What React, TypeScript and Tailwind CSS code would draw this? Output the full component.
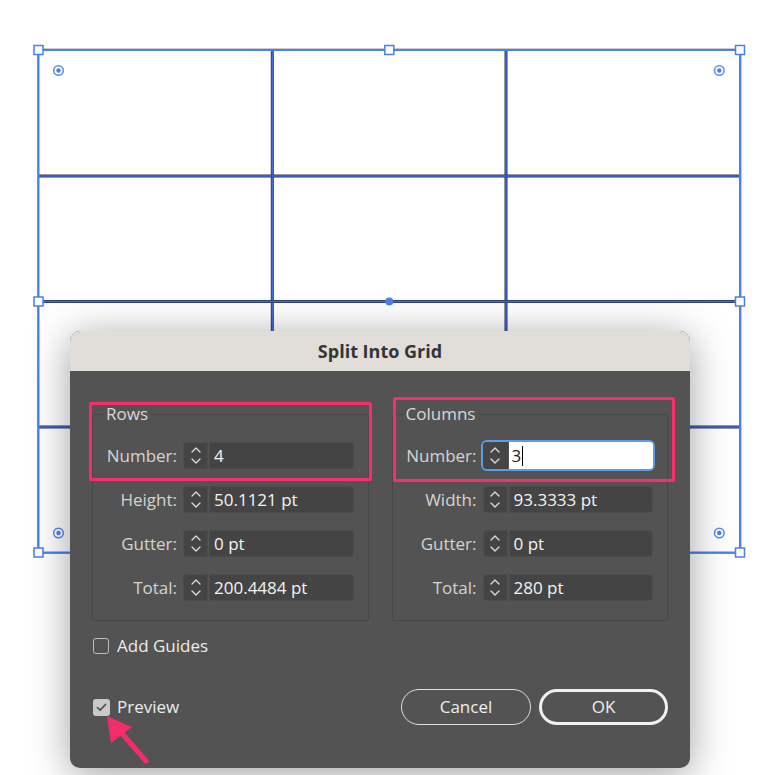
import React from "react";

const FONT = { fontFamily: '"Open Sans", "Noto Sans", sans-serif' };

function Spinner({ focused }: { focused?: boolean }) {
  return (
    <div
      className={
        "flex w-[25px] shrink-0 flex-col items-center justify-center gap-[5px] rounded-l-[4px] " +
        (focused ? "bg-[#454545]" : "bg-[#444444] border border-[#4c4c4c]")
      }
    >
      <svg width="10" height="6" viewBox="0 0 10 6">
        <path d="M1 5 L5 1 L9 5" fill="none" stroke="#dcdcdc" strokeWidth="1.3" strokeLinecap="round" strokeLinejoin="round" />
      </svg>
      <svg width="10" height="6" viewBox="0 0 10 6">
        <path d="M1 1 L5 5 L9 1" fill="none" stroke="#dcdcdc" strokeWidth="1.3" strokeLinecap="round" strokeLinejoin="round" />
      </svg>
    </div>
  );
}

function Field({ label, value, focused }: { label: string; value: string; focused?: boolean }) {
  return (
    <div className="flex h-[27px] items-center">
      <div className="w-[76px] text-right text-[17px] font-medium leading-none text-[#d4d4d4]">{label}</div>
      <div
        className={
          "ml-[6px] flex h-full flex-1 gap-px " +
          (focused ? "rounded-[4px] ring-2 ring-[#5c9ee6]" : "")
        }
      >
        <Spinner focused={focused} />
        {focused ? (
          <div className="flex flex-1 items-center rounded-r-[3px] bg-white pl-[3px] text-[17px] font-medium leading-none text-[#222]">
            3<span className="ml-px inline-block h-[20px] w-px bg-black" />
          </div>
        ) : (
          <div className="flex flex-1 items-center rounded-r-[4px] border border-[#4c4c4c] bg-[#444444] pl-[4px] text-[17px] font-medium leading-none text-[#f4f4f4]">
            {value}
          </div>
        )}
      </div>
    </div>
  );
}

function Group({ title, fields }: { title: string; fields: { label: string; value: string; focused?: boolean }[] }) {
  return (
    <fieldset className="rounded-[3px] border border-[#474747] pb-[19px] pl-[8px] pr-[14px]">
      <legend className="ml-[2px] px-[3px] text-[17px] font-medium leading-[24px] text-[#d8d8d8]">{title}</legend>
      <div className="mt-[16px] flex flex-col gap-[17px]">
        {fields.map((f) => (
          <Field key={f.label} {...f} />
        ))}
      </div>
    </fieldset>
  );
}

function Canvas() {
  const xs = [38.5, 272.3, 506, 740];
  const ys = [50, 176, 301.5, 427, 552.5];
  const handles: [number, number][] = [
    [38.5, 50], [389.3, 50], [740, 50],
    [38.5, 301.5], [740, 301.5],
    [38.5, 552.5], [389.3, 552.5], [740, 552.5],
  ];
  const targets: [number, number][] = [
    [58.5, 70.5], [719.3, 70.5], [58.5, 533], [719.3, 533],
  ];
  return (
    <svg className="absolute left-0 top-0" width="768" height="775" viewBox="0 0 768 775">
      {[1, 2].map((i) => (
        <g key={"v" + i}>
          <line x1={xs[i]} y1={ys[0]} x2={xs[i]} y2={ys[4]} stroke="#2a3358" strokeWidth="3" />
          <line x1={xs[i]} y1={ys[0]} x2={xs[i]} y2={ys[4]} stroke="#3e6ce0" strokeWidth="1.5" />
        </g>
      ))}
      {[1, 2, 3].map((i) => (
        <g key={"h" + i}>
          <line x1={xs[0]} y1={ys[i]} x2={xs[3]} y2={ys[i]} stroke="#2a3358" strokeWidth="3" />
          <line x1={xs[0]} y1={ys[i]} x2={xs[3]} y2={ys[i]} stroke="#3e6ce0" strokeWidth="1.5" />
        </g>
      ))}
      <rect x={xs[0] - 1} y={ys[0] - 1} width={xs[3] - xs[0] + 2} height={ys[4] - ys[0] + 2} fill="none" stroke="#9a9a9a" strokeWidth="1" />
      <rect x={xs[0]} y={ys[0]} width={xs[3] - xs[0]} height={ys[4] - ys[0]} fill="none" stroke="#4a7ff0" strokeWidth="2" />
      {targets.map(([x, y], i) => (
        <g key={"t" + i}>
          <circle cx={x} cy={y} r="4.8" fill="#fff" stroke="#5a8af5" strokeWidth="1.5" />
          <circle cx={x} cy={y} r="2.2" fill="#4a7ff0" />
        </g>
      ))}
      {handles.map(([x, y], i) => (
        <rect key={"hd" + i} x={x - 4.5} y={y - 4.5} width="9" height="9" fill="#fff" stroke="#4a7ff0" strokeWidth="1.5" />
      ))}
      <circle cx="389.3" cy="301.5" r="4" fill="#4a80f0" />
    </svg>
  );
}

export default function App() {
  return (
    <div className="relative h-[775px] w-[768px] overflow-hidden bg-white" style={FONT}>
      <Canvas />

      <div className="absolute left-[70px] top-[331px] flex h-[437px] w-[620px] flex-col overflow-hidden rounded-[10px] bg-[#535353] shadow-[0_6px_40px_rgba(0,0,0,0.38)]">
        <div className="flex h-[40px] shrink-0 items-center justify-center bg-[#e1ddd8] text-[18px] font-bold text-[#353535]">
          Split Into Grid
        </div>
        <div className="flex flex-1 flex-col px-[22px] pt-[31px]">
          <div className="grid grid-cols-2 gap-[23px]">
            <Group
              title="Rows"
              fields={[
                { label: "Number:", value: "4" },
                { label: "Height:", value: "50.1121 pt" },
                { label: "Gutter:", value: "0 pt" },
                { label: "Total:", value: "200.4484 pt" },
              ]}
            />
            <Group
              title="Columns"
              fields={[
                { label: "Number:", value: "3", focused: true },
                { label: "Width:", value: "93.3333 pt" },
                { label: "Gutter:", value: "0 pt" },
                { label: "Total:", value: "280 pt" },
              ]}
            />
          </div>

          <div className="mt-[14px] flex h-[22px] items-center pl-px">
            <div className="h-[16px] w-[16px] rounded-[3px] border-[1.5px] border-[#bdbdbd]" />
            <span className="ml-[8px] text-[17px] font-medium leading-[22px] text-[#ececec]">Add Guides</span>
          </div>

          <div className="mt-[32px] flex items-center justify-between">
            <div className="flex items-center pl-px">
              <div className="flex h-[17px] w-[17px] items-center justify-center rounded-[3px] bg-[#c9c9c9]">
                <svg width="11" height="9" viewBox="0 0 11 9">
                  <path d="M1.5 4.6 L4.2 7.2 L9.5 1.5" fill="none" stroke="#555" strokeWidth="1.8" strokeLinecap="round" strokeLinejoin="round" />
                </svg>
              </div>
              <span className="ml-[7px] text-[17px] font-medium leading-[22px] text-[#ececec]">Preview</span>
            </div>
            <div className="flex gap-[8px]">
              <button className="flex h-[36px] w-[130px] items-center justify-center rounded-full border-[1.5px] border-[#dedede] text-[17px] font-medium text-[#eeeeee]">
                Cancel
              </button>
              <button className="flex h-[36px] w-[129px] items-center justify-center rounded-full border-[3px] border-[#f0f0f0] text-[17px] font-medium text-[#eeeeee]">
                OK
              </button>
            </div>
          </div>
        </div>

        <div className="absolute left-[19px] top-[71px] h-[79px] w-[283px] rounded-[2px] border-[3px] border-[#f62f6b]" />
        <div className="absolute left-[323px] top-[66px] h-[85px] w-[282px] rounded-[2px] border-[3px] border-[#f62f6b]" />
      </div>

      <svg className="absolute left-0 top-0" width="768" height="775" viewBox="0 0 768 775">
        <line x1="146" y1="761" x2="119" y2="730" stroke="#f22e6a" strokeWidth="5" strokeLinecap="round" />
        <polygon points="107,716 111,743 132,727" fill="#f22e6a" />
      </svg>
    </div>
  );
}
